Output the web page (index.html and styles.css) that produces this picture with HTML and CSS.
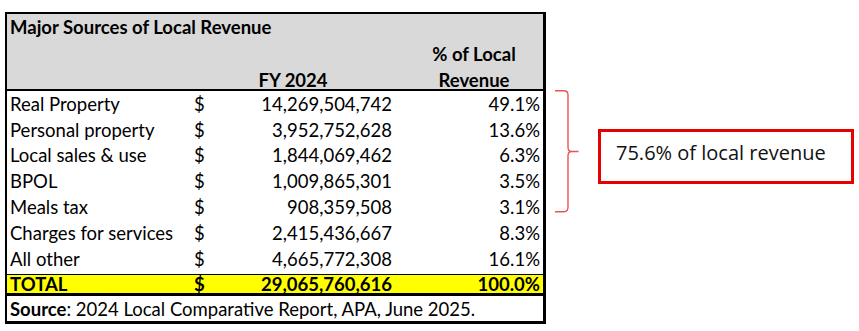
FILE: index.html
```html
<!DOCTYPE html>
<html lang="en">
<head>
  <meta charset="UTF-8">
  <meta name="viewport" content="width=device-width, initial-scale=1.0">
  <title>Major Sources of Local Revenue</title>
  <link rel="stylesheet" href="styles.css">
</head>
<body>
<div class="slide">
  <div class="revenue-table">
    <div class="table-header">
      <div class="table-title">Major Sources of Local Revenue</div>
      <div class="head-amount">FY 2024</div>
      <div class="head-pct">% of Local<br>Revenue</div>
    </div>

    <div class="row">
      <div class="cell-label">Real Property</div>
      <div class="cell-amount"><span>$</span><span>14,269,504,742</span></div>
      <div class="cell-pct">49.1%</div>
    </div>
    <div class="row">
      <div class="cell-label">Personal property</div>
      <div class="cell-amount"><span>$</span><span>3,952,752,628</span></div>
      <div class="cell-pct">13.6%</div>
    </div>
    <div class="row">
      <div class="cell-label">Local sales &amp; use</div>
      <div class="cell-amount"><span>$</span><span>1,844,069,462</span></div>
      <div class="cell-pct">6.3%</div>
    </div>
    <div class="row">
      <div class="cell-label">BPOL</div>
      <div class="cell-amount"><span>$</span><span>1,009,865,301</span></div>
      <div class="cell-pct">3.5%</div>
    </div>
    <div class="row">
      <div class="cell-label">Meals tax</div>
      <div class="cell-amount"><span>$</span><span>908,359,508</span></div>
      <div class="cell-pct">3.1%</div>
    </div>
    <div class="row">
      <div class="cell-label">Charges for services</div>
      <div class="cell-amount"><span>$</span><span>2,415,436,667</span></div>
      <div class="cell-pct">8.3%</div>
    </div>
    <div class="row row-last">
      <div class="cell-label">All other</div>
      <div class="cell-amount"><span>$</span><span>4,665,772,308</span></div>
      <div class="cell-pct">16.1%</div>
    </div>

    <div class="row row-total">
      <div class="cell-label">TOTAL</div>
      <div class="cell-amount"><span>$</span><span>29,065,760,616</span></div>
      <div class="cell-pct">100.0%</div>
    </div>

    <div class="table-source"><strong>Source</strong>: 2024 Local Comparative Report, APA, June 2025.</div>
  </div>

  <svg class="brace" width="24" height="124" viewBox="0 0 24 124">
    <path d="M0 0.7 H9 Q13 0.7 13 5 V57 Q13 61.5 16.5 61.5 H23.5 M16.5 61.5 Q13 61.5 13 66 V117 Q13 121.7 9 121.7 H0"
          fill="none" stroke="#e95454" stroke-width="1.4"/>
  </svg>

  <div class="callout">75.6% of local revenue</div>
</div>
</body>
</html>
```

FILE: styles.css
```css
:root {
  --header-gray: #d9d9d9;
  --total-yellow: #ffff00;
  --line: #000000;
  --callout-red: #e60000;
}

* {
  box-sizing: border-box;
  margin: 0;
  padding: 0;
}

body {
  background: #ffffff;
  color: #000000;
  font-family: Lato, "Liberation Sans", sans-serif;
}

.slide {
  display: flex;
  align-items: flex-start;
  padding: 12px 0 0 5px;
}

/* table */

.revenue-table {
  width: 541px;
  border-top: 2px solid var(--line);
  border-left: 2px solid var(--line);
  border-right: 3px solid var(--line);
  border-bottom: 3px solid var(--line);
  font-size: 18.5px;
}

.table-header,
.row {
  display: grid;
  grid-template-columns: 183px 215px 1fr;
}

.table-header {
  background: var(--header-gray);
  grid-template-rows: 25.5px 48.5px;
  padding-top: 1px;
  border-bottom: 2px solid var(--line);
  font-weight: 700;
  line-height: 26px;
}

.table-title {
  grid-column: 1 / -1;
  padding-left: 3px;
  line-height: 25.5px;
}

.head-amount {
  grid-column: 2;
  align-self: end;
  text-align: center;
  padding-right: 9px;
  margin-bottom: -4px;
}

.head-pct {
  grid-column: 3;
  align-self: end;
  text-align: center;
  margin-bottom: -4px;
}

.row {
  height: 25.8px;
  align-items: center;
  line-height: 20px;
}

.row-last {
  height: 28px;
  padding-bottom: 2px;
}

.cell-label {
  padding-left: 3px;
  white-space: nowrap;
}

.cell-amount {
  display: flex;
  justify-content: space-between;
  padding: 0 13px 0 4px;
}

.cell-pct {
  text-align: right;
  padding-right: 3px;
}

.row-total {
  height: 22px;
  line-height: 18px;
  background: var(--total-yellow);
  border-top: 1px solid var(--line);
  border-bottom: 3px solid var(--line);
  font-weight: 700;
}

.table-source {
  height: 25.2px;
  line-height: 25.2px;
  padding: 1px 0 0 3px;
  white-space: nowrap;
}

/* annotation */

.brace {
  display: block;
  margin: 78px 0 0 9px;
}

.callout {
  width: 256px;
  height: 55px;
  margin: 117px 0 0 19px;
  border: 3px solid var(--callout-red);
  padding: 7px 0 0 15px;
  font-family: "Open Sans", sans-serif;
  font-size: 20px;
  line-height: 28px;
  color: #111111;
  white-space: nowrap;
}
```
